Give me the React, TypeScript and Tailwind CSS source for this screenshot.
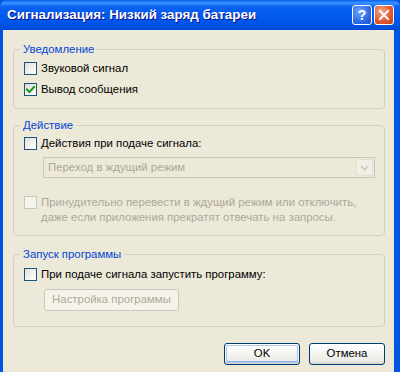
import React from 'react'

const font = { fontFamily: '"Liberation Sans", Arial, sans-serif' }

function Check({ checked = false, disabled = false }: { checked?: boolean; disabled?: boolean }) {
  return (
    <span
      className={`flex h-[13px] w-[13px] shrink-0 items-center justify-center border ${
        disabled
          ? 'border-[#CAC8BB] bg-[#F5F4EA]'
          : 'border-[#1C5180] bg-[linear-gradient(135deg,#DCDCD7_0%,#F5F5F1_60%,#FFFFFF_100%)]'
      }`}
    >
      {checked && (
        <svg width="11" height="11" viewBox="0 0 11 11">
          <path d="M2 5.5 L4.5 8 L9 3" fill="none" stroke="#21A121" strokeWidth="2.2" strokeLinecap="square" />
        </svg>
      )}
    </span>
  )
}

function Group({ title, children, className = '' }: { title: string; children: React.ReactNode; className?: string }) {
  return (
    <fieldset className={`w-[372px] rounded-[4px] border border-[#D0D0BF] ${className}`}>
      <legend className="ml-[6px] px-[3px] text-[11.4px] leading-[13px] text-[#0046D5]">{title}</legend>
      {children}
    </fieldset>
  )
}

function XpButton({ label, disabled = false, focused = false }: { label: string; disabled?: boolean; focused?: boolean }) {
  if (disabled) {
    return (
      <div className="flex h-[22px] w-[135px] items-center justify-center rounded-[3px] border border-[#C9C7BA] bg-[#F5F4EA] text-[11.4px] text-[#ACA899]">
        {label}
      </div>
    )
  }
  return (
    <div className="flex h-[22px] w-[76px] items-center justify-center rounded-[3px] border border-[#003C74] bg-[linear-gradient(to_bottom,#FFFFFF_0%,#F4F4F0_50%,#ECEBE6_85%,#D6D0C5_100%)] p-px">
      <div
        className={`flex h-full w-full items-center justify-center rounded-[2px] text-[11.4px] text-black ${
          focused ? 'shadow-[inset_0_0_0_1px_#B3CBF4,inset_0_-1px_0_1px_#8BB0EC]' : ''
        }`}
      >
        {label}
      </div>
    </div>
  )
}

export default function App() {
  return (
    <div className="flex h-[372px] w-[400px] flex-col overflow-hidden bg-[#0054E3]" style={font}>
      {/* Title bar */}
      <div className="flex h-[30px] shrink-0 items-center rounded-t-[7px] bg-[linear-gradient(to_bottom,#0A5FEC_0%,#3D95FF_10%,#0A62F2_22%,#0058EE_60%,#0052E0_88%,#0046D5_100%)] pl-[7px] pr-[3px]">
        <span className="flex-1 text-[13.4px] font-bold text-white [text-shadow:1px_1px_0_#0F1089]">
          Сигнализация: Низкий заряд батареи
        </span>
        <div className="mb-px mr-[3px] flex gap-[2px]">
          <div className="flex h-[20px] w-[20px] items-center justify-center rounded-[3px] border border-white bg-[radial-gradient(circle_at_35%_30%,#6EA6FF_0%,#2F6FEA_55%,#1D4FD0_100%)] text-[14px] font-bold leading-none text-white">
            ?
          </div>
          <div className="flex h-[20px] w-[20px] items-center justify-center rounded-[3px] border border-white bg-[radial-gradient(circle_at_35%_30%,#F6A786_0%,#E35A33_55%,#C43D1B_100%)]">
            <svg width="12" height="12" viewBox="0 0 12 12">
              <path d="M2 2 L10 10 M10 2 L2 10" stroke="white" strokeWidth="2" strokeLinecap="square" />
            </svg>
          </div>
        </div>
      </div>

      {/* Body */}
      <div className="flex flex-1">
        <div className="w-[3px] shrink-0 bg-[#0055E5]" />
        <div className="flex w-[391px] flex-col bg-[#ECE9D8] pl-[10px] text-[11.4px] text-black">
          <Group title="Уведомление" className="mt-[13px] pb-[12px]">
            <div className="flex flex-col gap-[8px] pl-[10px] pt-[6px]">
              <div className="flex h-[13px] items-center gap-[4px]">
                <Check />
                <span className="leading-[13px]">Звуковой сигнал</span>
              </div>
              <div className="flex h-[13px] items-center gap-[4px]">
                <Check checked />
                <span className="leading-[13px]">Вывод сообщения</span>
              </div>
            </div>
          </Group>

          <Group title="Действие" className="mt-[10px] pb-[10px]">
            <div className="flex flex-col pl-[10px] pt-[5px]">
              <div className="flex h-[13px] items-center gap-[4px]">
                <Check />
                <span className="leading-[13px]">Действия при подаче сигнала:</span>
              </div>
              <div className="ml-[19px] mt-[7px] flex h-[21px] w-[332px] items-center border border-[#C9C7BA] bg-[#ECE9D8] pl-[4px] pr-px">
                <span className="flex-1 text-[#ACA899]">Переход в ждущий режим</span>
                <div className="flex h-[17px] w-[17px] items-center justify-center rounded-[2px] border border-[#E2DFD2] bg-[#F1EFE6]">
                  <svg width="9" height="6" viewBox="0 0 9 6">
                    <path d="M1 1 L4.5 4.5 L8 1" fill="none" stroke="#C9C7BA" strokeWidth="1.6" />
                  </svg>
                </div>
              </div>
              <div className="mt-[18px] flex items-start gap-[4px]">
                <Check disabled />
                <span className="-mt-px leading-[15px] text-[#ACA899]">
                  Принудительно перевести в ждущий режим или отключить,
                  <br />
                  даже если приложения прекратят отвечать на запросы.
                </span>
              </div>
            </div>
          </Group>

          <Group title="Запуск программы" className="mt-[12px] pb-[15px]">
            <div className="flex flex-col pl-[10px] pt-[7px]">
              <div className="flex h-[13px] items-center gap-[4px]">
                <Check />
                <span className="leading-[13px]">При подаче сигнала запустить программу:</span>
              </div>
              <div className="ml-[20px] mt-[8px]">
                <XpButton label="Настройка программы" disabled />
              </div>
            </div>
          </Group>

          <div className="mt-[16px] flex justify-end gap-[9px] pr-[9px]">
            <XpButton label="OK" focused />
            <XpButton label="Отмена" />
          </div>
        </div>
        <div className="w-[6px] shrink-0 bg-[#0055E5]" />
      </div>
    </div>
  )
}
